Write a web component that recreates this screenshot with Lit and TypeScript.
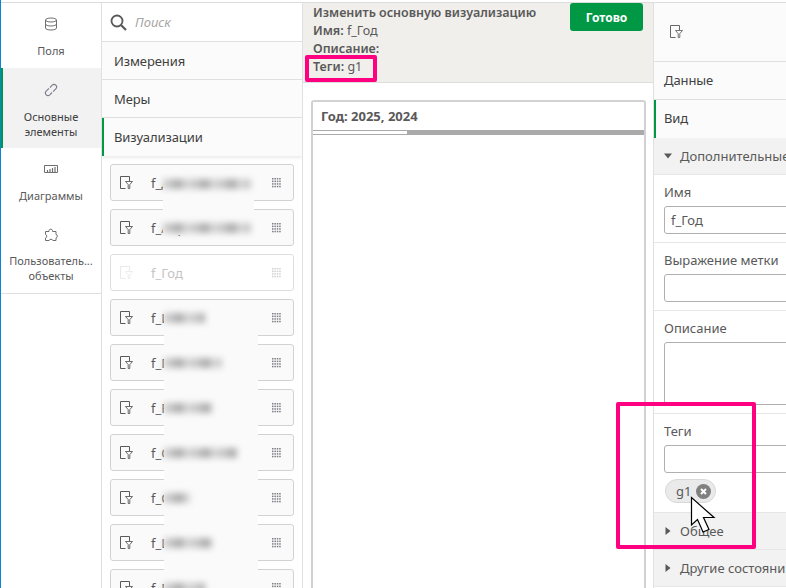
import { LitElement, html, css, svg } from "lit";
import { customElement } from "lit/decorators.js";

const vizIcon = () => html`<svg class="viz" width="14" height="14" viewBox="0 0 14 14" fill="none" stroke="currentColor" stroke-width="1">
  <path d="M9.5 5V.5H.5V12.5H5.5" />
  <path d="M5.5 5.5H12.5L9.8 8.6V12.5H8.2V8.6Z" stroke-width="0.9" />
</svg>`;

const grip = html`<svg class="grip" width="9" height="10" viewBox="0 0 9 10" fill="#7d7d85">
  ${[0, 1, 2, 3].flatMap((r) =>
    [0, 1, 2, 3].map((c) => svg`<rect x=${c * 2.4} y=${r * 2.6} width="1.5" height="1.5" />`)
  )}
</svg>`;

const caret = (open: boolean) =>
  html`<svg class="caret" width="8" height="8" viewBox="0 0 8 8" fill="#595959">
    <path d=${open ? "M0 1.5H8L4 6.5Z" : "M1.5 0L6.5 4L1.5 8Z"} />
  </svg>`;

const rows = ["f_Дата", "f_Адрес", "f_Год", "f_Имя", "f_Группа", "f_Регион", "f_Отдел", "f_Счёт", "f_Цена", "f_Город"];

// blurred names: y centre and width inside each patch
const smudgesTop = [
  { y: 11, w: 88 },
  { y: 55, w: 88 },
];
const smudgesBottom = [
  { y: 7, w: 41 },
  { y: 52, w: 58 },
  { y: 97, w: 48 },
  { y: 142, w: 73 },
  { y: 187, w: 26 },
  { y: 232, w: 48 },
  { y: 277, w: 41 },
];

@customElement("app-root")
export class AppRoot extends LitElement {
  static styles = css`
    :host {
      display: block;
      width: 786px;
      height: 588px;
      overflow: hidden;
      position: relative;
      background: #fff;
      color: #595959;
      font-family: "Noto Sans", "Open Sans", sans-serif;
      font-size: 13px;
      box-sizing: border-box;
      padding-top: 2px;
      border-left: 1px solid #0a84d6;
    }
    * {
      box-sizing: border-box;
    }
    .page {
      display: flex;
      height: 586px;
      border-top: 1px solid #dcdcdc;
    }

    /* left nav */
    .nav {
      width: 101px;
      flex: none;
      border-right: 1px solid #e0e0e0;
    }
    .nav-list {
      border-bottom: 1px solid #e0e0e0;
    }
    .nav-item {
      display: flex;
      flex-direction: column;
      align-items: center;
      text-align: center;
      font-size: 11px;
      line-height: 15px;
      color: #595959;
    }
    .nav-item svg {
      display: block;
      margin-bottom: 12px;
    }
    .nav-item.fields {
      height: 65px;
      padding-top: 14px;
    }
    .nav-item.active {
      height: 80px;
      padding-top: 15px;
      background: #f2f2f2;
      border-left: 2px solid #009845;
      color: #404040;
      padding-right: 2px;
    }
    .nav-item.charts {
      height: 65px;
      padding-top: 14px;
    }
    .nav-item.custom {
      height: 80px;
      padding-top: 15px;
    }
    .nav-item.custom svg {
      margin-bottom: 11px;
    }

    /* assets */
    .assets {
      width: 201px;
      flex: none;
      border-right: 1px solid #e0e0e0;
      display: flex;
      flex-direction: column;
      overflow: hidden;
    }
    .search {
      height: 39px;
      flex: none;
      display: flex;
      align-items: center;
      gap: 8px;
      padding: 0 8px;
      border-bottom: 1px solid #e0e0e0;
      font-style: italic;
      color: #a6a6a6;
    }
    .tab {
      height: 38px;
      flex: none;
      display: flex;
      align-items: center;
      padding-left: 12px;
      border-bottom: 1px solid #e0e0e0;
      color: #404040;
      background: #fbfbfb;
      letter-spacing: -0.1px;
    }
    .tab.on {
      border-left: 2px solid #009845;
      padding-left: 10px;
      border-bottom: none;
      box-shadow: 0 2px 3px rgba(0, 0, 0, 0.08);
    }
    .list {
      position: relative;
      flex: 1;
      display: flex;
      flex-direction: column;
      gap: 8px;
      padding: 8px 8px 0 8px;
      overflow: hidden;
    }
    .card {
      height: 37px;
      flex: none;
      display: flex;
      align-items: center;
      border: 1px solid #d2d2d2;
      border-radius: 3px;
      background: #fafafa;
      padding: 0 12px 0 9px;
      color: #595959;
    }
    .card.dim {
      background: #fff;
      color: #c4c4c4;
      border-color: #dedede;
    }
    .card.dim .viz,
    .card.dim .grip {
      opacity: 0.35;
    }
    .card .name {
      margin-left: 17px;
      flex: 1;
    }
    .patch {
      position: absolute;
      background: #fafafa;
    }
    .patch.top {
      left: 61px;
      top: 16px;
      width: 91px;
      height: 63px;
    }
    .patch.bottom {
      left: 62px;
      top: 154px;
      width: 94px;
      height: 300px;
    }
    .smudge {
      position: absolute;
      left: 0;
      height: 10px;
      background: repeating-linear-gradient(90deg, #c9c9c9 0 9px, #b0b0b0 9px 20px, #d4d4d4 20px 27px);
      filter: blur(3px);
    }

    /* centre */
    .centre {
      flex: 1;
      display: flex;
      flex-direction: column;
      min-width: 0;
    }
    .head {
      position: relative;
      height: 80px;
      flex: none;
      background: #f1efeb;
      border-bottom: 1px solid #dedede;
      padding: 0 10px;
      display: flex;
      justify-content: space-between;
    }
    .head-text {
      padding-top: 1px;
      line-height: 18px;
      font-size: 12.5px;
      color: #595959;
    }
    .head-text b {
      font-weight: 600;
    }
    .done {
      width: 73px;
      height: 28px;
      background: #009845;
      color: #fff;
      font-weight: 700;
      font-size: 12px;
      border-radius: 3px;
      display: flex;
      align-items: center;
      justify-content: center;
    }
    .stage {
      flex: 1;
      padding: 17px 7px 0 8px;
    }
    .viz-card {
      height: 100%;
      border: 2px solid #d2d2d2;
      border-bottom: none;
      border-radius: 3px 3px 0 0;
    }
    .viz-title {
      height: 28px;
      display: flex;
      align-items: center;
      padding-left: 8px;
      font-weight: 700;
      color: #595959;
    }
    .scroll {
      height: 5px;
      background: #aaa;
    }
    .scroll div {
      width: 94px;
      height: 4px;
      background: #fff;
      border-top: 1px solid #aaa;
    }

    /* properties */
    .props {
      width: 133px;
      flex: none;
      border-left: 1px solid #e0e0e0;
      overflow: hidden;
    }
    .props-head {
      height: 59px;
      display: flex;
      align-items: center;
      padding-left: 16px;
      border-bottom: 1px solid #e0e0e0;
      background: #fbfbfb;
      color: #666;
    }
    .props .tab {
      padding-left: 10px;
      padding-bottom: 2px;
    }
    .props .tab.on {
      padding-left: 8px;
      padding-bottom: 3px;
    }
    .section {
      height: 37px;
      display: flex;
      align-items: center;
      gap: 8px;
      padding-left: 10px;
      background: #f2f2f2;
      border-bottom: 1px solid #e6e6e6;
      white-space: nowrap;
    }
    .section .caret {
      flex: none;
    }
    .field {
      padding: 8px 0 8px 10px;
      border-bottom: 1px solid #e6e6e6;
      white-space: nowrap;
    }
    .field.tags {
      padding-bottom: 9px;
    }
    .field label {
      display: block;
      line-height: 18px;
      margin-bottom: 5px;
    }
    .input {
      width: 140px;
      height: 28px;
      border: 1px solid #b0b0b0;
      border-radius: 3px;
      background: #fff;
      display: flex;
      align-items: center;
      padding-left: 6px;
    }
    .input.area {
      height: 63px;
    }
    .chip {
      display: flex;
      align-items: center;
      justify-content: space-between;
      width: 51px;
      height: 24px;
      margin: 6px 0 0 1px;
      padding: 0 4px 0 10px;
      border: 1px solid #d8d8d8;
      border-radius: 12px;
      background: #eaeaea;
    }
    .chip svg {
      flex: none;
    }

    /* annotations */
    .mark {
      position: absolute;
      border: 4px solid #ff0080;
      border-radius: 2px;
      pointer-events: none;
    }
    .mark.head-mark {
      left: 304px;
      top: 55px;
      width: 72px;
      height: 27px;
    }
    .mark.tag-mark {
      left: 615px;
      top: 402px;
      width: 140px;
      height: 147px;
    }
    .cursor {
      position: absolute;
      left: 689px;
      top: 496px;
    }
  `;

  render() {
    return html`
      <div class="page">
        <nav class="nav">
          <div class="nav-list">
            <div class="nav-item fields">
              <svg width="14" height="14" viewBox="0 0 14 14" fill="none" stroke="#6f6f6f">
                <ellipse cx="7" cy="3" rx="5.5" ry="2" />
                <path d="M1.5 3V11C1.5 12.2 4 13 7 13S12.5 12.2 12.5 11V3M1.5 7C1.5 8.2 4 9 7 9S12.5 8.2 12.5 7" />
              </svg>
              Поля
            </div>
            <div class="nav-item active">
              <svg width="14" height="14" viewBox="0 0 14 14" fill="none" stroke="#7b7b8c" stroke-width="1.1">
                <path d="M6 4.5L8.2 2.2C9.2 1.2 10.8 1.2 11.8 2.2S12.8 4.8 11.8 5.8L9 8.6" />
                <path d="M8 9.5L5.8 11.8C4.8 12.8 3.2 12.8 2.2 11.8S1.2 9.2 2.2 8.2L5 5.4" />
              </svg>
              Основные<br />элементы
            </div>
            <div class="nav-item charts">
              <svg width="14" height="14" viewBox="0 0 14 14" fill="none" stroke="#6f6f6f">
                <path d="M.5 3.5H13.5V10.5H.5Z" />
                <path d="M3.5 10V8M6 10V7M8.5 10V6M11 10V5" stroke-width="1.2" />
              </svg>
              Диаграммы
            </div>
            <div class="nav-item custom">
              <svg width="14" height="14" viewBox="0 0 14 14" fill="none" stroke="#6f6f6f">
                <path d="M5 2.5C5 .8 8.5 .8 8.5 2.5V3.5H12V6.5C13.8 6.5 13.8 10 12 10V12.5H8.8C8.8 10.8 5.2 10.8 5.2 12.5H1.5V10C3.2 10 3.2 6.5 1.5 6.5V3.5H5Z" />
              </svg>
              Пользователь...<br />объекты
            </div>
          </div>
        </nav>

        <section class="assets">
          <div class="search">
            <svg width="17" height="17" viewBox="0 0 17 17" fill="none" stroke="#595959" stroke-width="1.8">
              <circle cx="7" cy="7" r="5.5" />
              <path d="M11 11L16 16" stroke-width="2.2" />
            </svg>
            Поиск
          </div>
          <div class="tab">Измерения</div>
          <div class="tab">Меры</div>
          <div class="tab on">Визуализации</div>
          <div class="list">
            ${rows.map(
              (name, i) => html`<div class="card ${i === 2 ? "dim" : ""}">
                ${vizIcon()}
                <span class="name">${name}</span>
                ${grip}
              </div>`
            )}
            <div class="patch top">
              ${smudgesTop.map((s) => html`<div class="smudge" style="top:${s.y - 4}px;width:${s.w}px"></div>`)}
            </div>
            <div class="patch bottom">
              ${smudgesBottom.map((s) => html`<div class="smudge" style="top:${s.y - 4}px;width:${s.w}px"></div>`)}
            </div>
          </div>
        </section>

        <main class="centre">
          <div class="head">
            <div class="head-text">
              <b>Изменить основную визуализацию</b><br />
              <b>Имя:</b> f_Год<br />
              <b>Описание:</b><br />
              <b>Теги:</b> g1
            </div>
            <div class="done">Готово</div>
          </div>
          <div class="stage">
            <div class="viz-card">
              <div class="viz-title">Год: 2025, 2024</div>
              <div class="scroll"><div></div></div>
            </div>
          </div>
        </main>

        <aside class="props">
          <div class="props-head">${vizIcon()}</div>
          <div class="tab">Данные</div>
          <div class="tab on">Вид</div>
          <div class="section">${caret(true)} Дополнительные</div>
          <div class="field">
            <label>Имя</label>
            <div class="input">f_Год</div>
          </div>
          <div class="field">
            <label>Выражение метки</label>
            <div class="input"></div>
          </div>
          <div class="field">
            <label>Описание</label>
            <div class="input area"></div>
          </div>
          <div class="field tags">
            <label>Теги</label>
            <div class="input"></div>
            <div class="chip">
              g1
              <svg width="15" height="15" viewBox="0 0 15 15">
                <circle cx="7.5" cy="7.5" r="7.5" fill="#808080" />
                <path d="M5 5L10 10M10 5L5 10" stroke="#fff" stroke-width="2" />
              </svg>
            </div>
          </div>
          <div class="section">${caret(false)} Общее</div>
          <div class="section">${caret(false)} Другие состояния</div>
        </aside>
      </div>

      <div class="mark head-mark"></div>
      <div class="mark tag-mark"></div>
      <svg class="cursor" width="28" height="44" viewBox="0 0 28 44" fill="#fff" stroke="#000" stroke-width="1.2">
        <path d="M1.5 1.5V29L7.5 23.5L13 36L19 33.5L13.5 21.5H24Z" />
      </svg>
    `;
  }
}
